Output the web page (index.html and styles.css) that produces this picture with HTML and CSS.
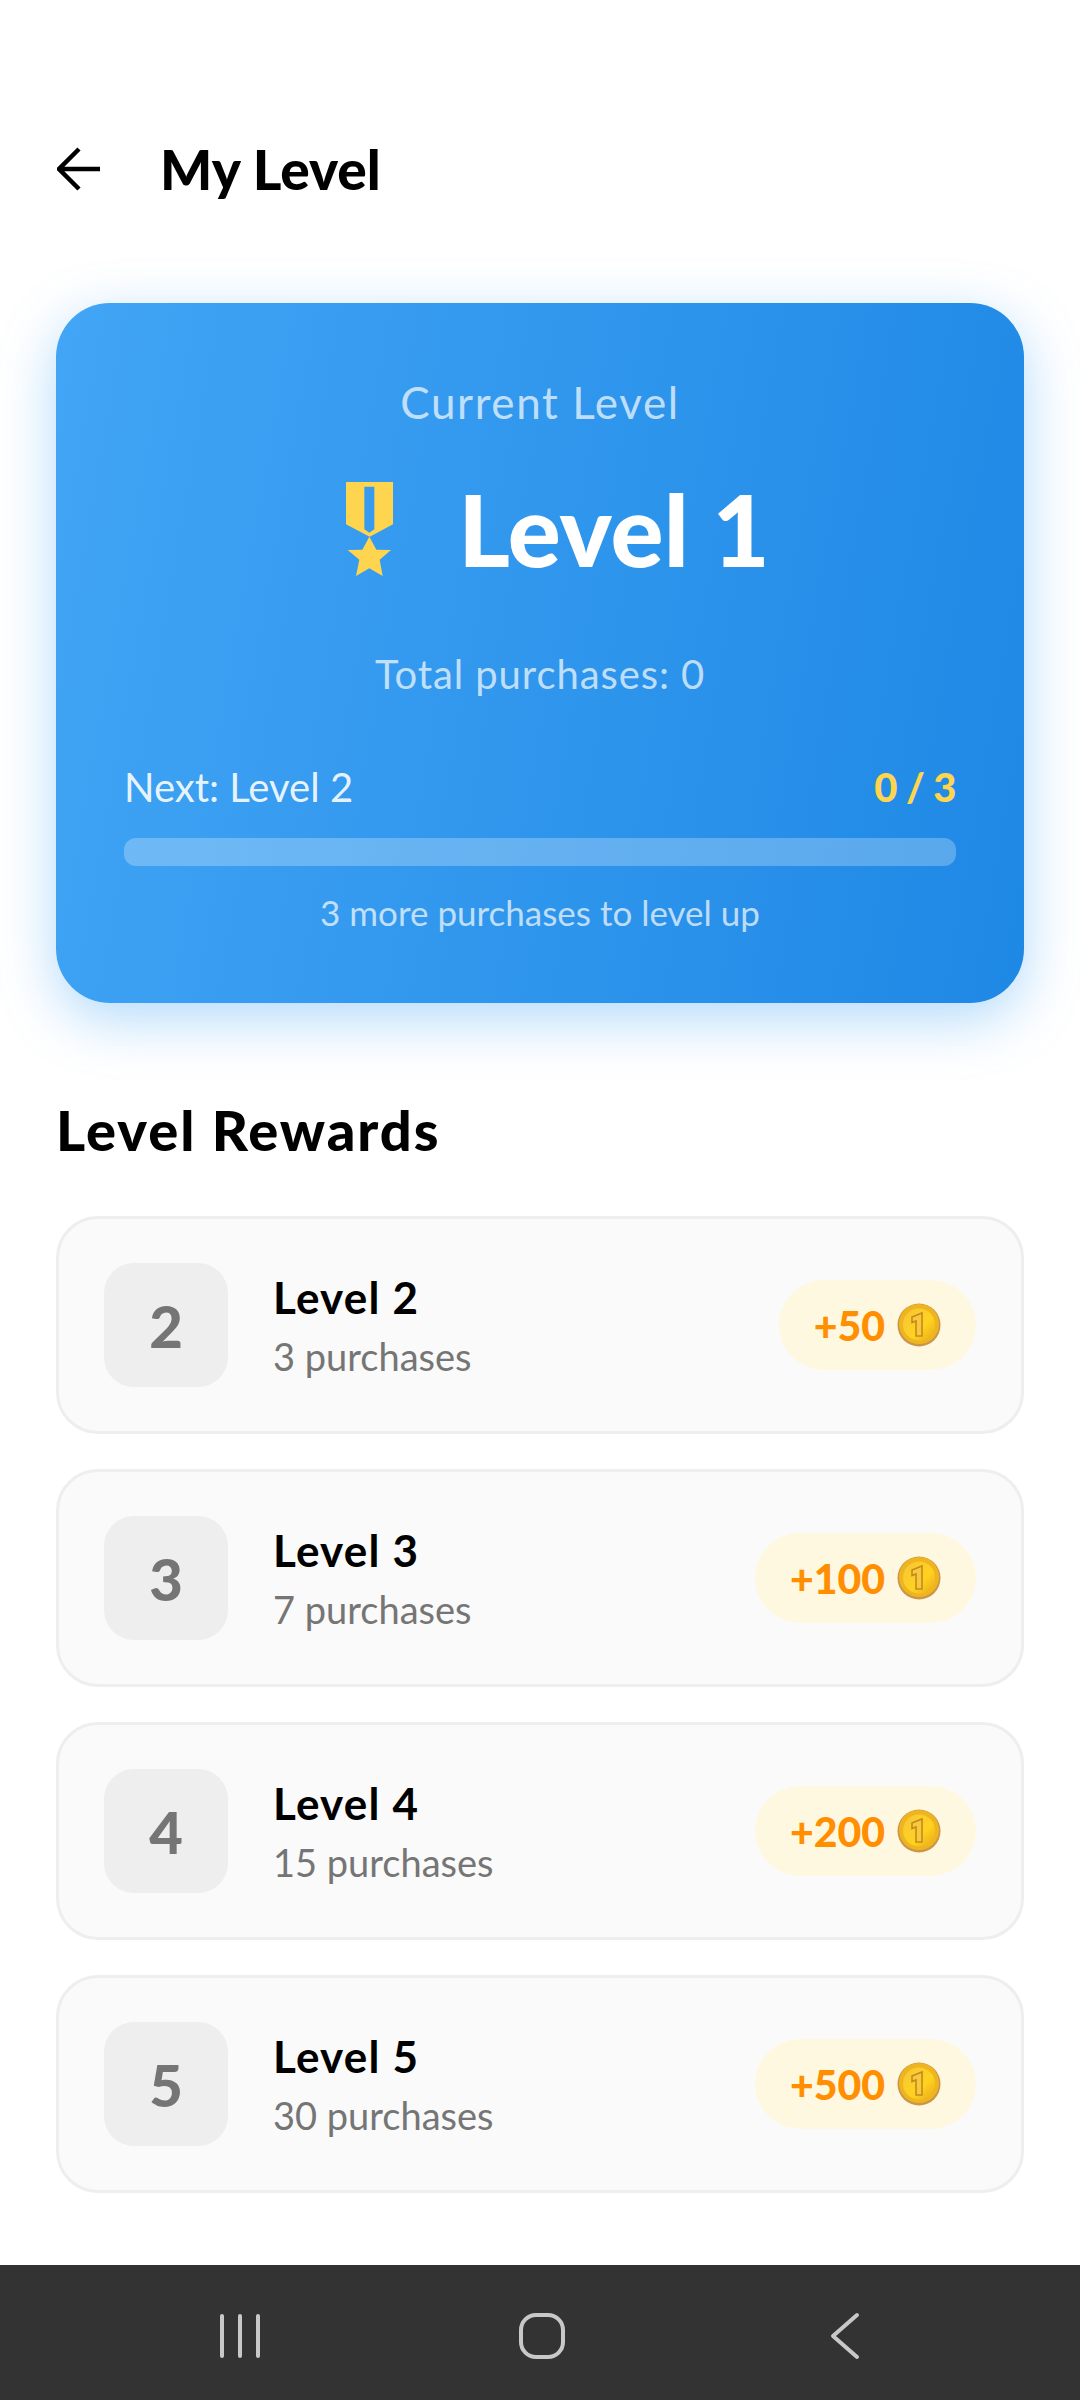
FILE: index.html
```html
<!DOCTYPE html>
<html>

<head>
  <meta charset="UTF-8" />
  <meta name="viewport" content="width=device-width, initial-scale=1.0" />
  <title>My Level</title>
  <link rel="stylesheet" href="styles.css">
</head>

<body>
  <div class="page">
    <header class="top-bar">
      <svg class="back-arrow" viewBox="0 0 44 44" width="44" height="44">
        <path d="M43 22H3M22 2L2 22l20 20" fill="none" stroke="#000" stroke-width="4.5" />
      </svg>
      <h1>My Level</h1>
    </header>

    <section class="level-card">
      <div class="current-label">Current Level</div>
      <div class="current-level">
        <svg class="medal" viewBox="137 98 141 282" width="47" height="94">
          <path fill-rule="evenodd" fill="#ffd54f"
            d="M137 98H278V225L208 262L137 225ZM192 112V240L207 250L222 240V112Z" />
          <path fill="#ffd54f" d="M207 262L228 301L272 302L238 331L247 380L207 357L167 380L177 331L142 302L186 301Z" />
        </svg>
        <span class="current-name">Level 1</span>
      </div>
      <div class="total">Total purchases: 0</div>
      <div class="next-row">
        <span>Next: Level 2</span>
        <span class="next-count">0 / 3</span>
      </div>
      <div class="progress"></div>
      <div class="hint">3 more purchases to level up</div>
    </section>

    <h2>Level Rewards</h2>

    <div class="reward-list">
      <div class="reward">
        <div class="reward-num">2</div>
        <div class="reward-info">
          <div class="reward-name">Level 2</div>
          <div class="reward-need">3 purchases</div>
        </div>
        <div class="reward-pill">+50
          <svg class="coin" viewBox="0 0 44 44" width="44" height="44">
            <use href="#coin" />
          </svg>
        </div>
      </div>
      <div class="reward">
        <div class="reward-num">3</div>
        <div class="reward-info">
          <div class="reward-name">Level 3</div>
          <div class="reward-need">7 purchases</div>
        </div>
        <div class="reward-pill">+100
          <svg class="coin" viewBox="0 0 44 44" width="44" height="44">
            <use href="#coin" />
          </svg>
        </div>
      </div>
      <div class="reward">
        <div class="reward-num">4</div>
        <div class="reward-info">
          <div class="reward-name">Level 4</div>
          <div class="reward-need">15 purchases</div>
        </div>
        <div class="reward-pill">+200
          <svg class="coin" viewBox="0 0 44 44" width="44" height="44">
            <use href="#coin" />
          </svg>
        </div>
      </div>
      <div class="reward">
        <div class="reward-num">5</div>
        <div class="reward-info">
          <div class="reward-name">Level 5</div>
          <div class="reward-need">30 purchases</div>
        </div>
        <div class="reward-pill">+500
          <svg class="coin" viewBox="0 0 44 44" width="44" height="44">
            <use href="#coin" />
          </svg>
        </div>
      </div>
    </div>
  </div>

  <nav class="nav-bar">
    <svg viewBox="0 0 44 46" width="44" height="46">
      <path d="M4 3V43M22 3V43M40 3V43" fill="none" stroke="#c8c8c8" stroke-width="4" stroke-linecap="round" />
    </svg>
    <svg viewBox="0 0 46 46" width="46" height="46">
      <rect x="2" y="2" width="42" height="42" rx="15" fill="none" stroke="#c8c8c8" stroke-width="4" />
    </svg>
    <svg viewBox="0 0 38 48" width="38" height="48">
      <path d="M35 3L11 24L35 45" fill="none" stroke="#c8c8c8" stroke-width="4" stroke-linecap="round"
        stroke-linejoin="round" />
    </svg>
  </nav>

  <svg class="defs" width="0" height="0">
    <defs>
      <linearGradient id="coinFill" x1="0" y1="0" x2="1" y2="1">
        <stop offset="0" stop-color="#f5c63a" />
        <stop offset="0.6" stop-color="#ffd21f" />
        <stop offset="1" stop-color="#e8a91a" />
      </linearGradient>
      <g id="coin">
        <circle cx="22" cy="22" r="21.5" fill="#c9964a" />
        <circle cx="22" cy="21" r="20" fill="#eeb51f" />
        <circle cx="22" cy="21.5" r="16" fill="url(#coinFill)" />
        <path d="M15 14L25 10V33H19V18L15 19.5Z" fill="#f7c93f" stroke="#c58a1c" stroke-width="1.6" />
      </g>
    </defs>
  </svg>
</body>

</html>
```

FILE: styles.css
```css
* {
  box-sizing: border-box;
}

body {
  margin: 0;
  width: 1080px;
  height: 2400px;
  display: flex;
  flex-direction: column;
  background: #fff;
  font-family: "Lato", "Noto Sans", sans-serif;
  color: #000;
}

.page {
  flex: 1;
  padding: 0 56px;
}

.defs {
  position: absolute;
}

.top-bar {
  display: flex;
  align-items: center;
  gap: 59px;
  height: 88px;
  margin-top: 125px;
  padding-left: 1px;
}

.back-arrow {
  flex: none;
}

h1 {
  margin: 0;
  font-size: 55px;
  font-weight: 900;
}

.level-card {
  margin-top: 90px;
  height: 700px;
  padding: 74px 68px 0;
  border-radius: 54px;
  background: linear-gradient(100deg, #42a5f5, #1e88e5);
  box-shadow: 0 16px 56px rgba(33, 150, 243, 0.35);
  color: #fff;
}

.current-label {
  text-align: center;
  font-size: 44px;
  line-height: 50px;
  letter-spacing: 1.6px;
  color: rgba(255, 255, 255, 0.7);
}

.current-level {
  display: flex;
  justify-content: center;
  align-items: center;
  gap: 65px;
  margin-top: 52px;
  padding-left: 36px;
  height: 100px;
}

.current-name {
  font-size: 99px;
  font-weight: 900;
  line-height: 100px;
}

.total {
  margin-top: 71px;
  text-align: center;
  font-size: 40px;
  line-height: 48px;
  letter-spacing: 0.9px;
  color: rgba(255, 255, 255, 0.7);
}

.next-row {
  display: flex;
  justify-content: space-between;
  margin-top: 66px;
  font-size: 40px;
  line-height: 46px;
  color: rgba(255, 255, 255, 0.9);
}

.next-count {
  font-weight: 900;
  letter-spacing: -0.5px;
  color: #ffd54f;
}

.progress {
  height: 28px;
  margin-top: 28px;
  border-radius: 12px;
  background: rgba(255, 255, 255, 0.26);
}

.hint {
  margin-top: 26px;
  text-align: center;
  font-size: 35px;
  line-height: 40px;
  color: rgba(255, 255, 255, 0.7);
}

h2 {
  margin: 95px 0 0;
  font-size: 56px;
  line-height: 64px;
  letter-spacing: 2px;
  font-weight: 900;
}

.reward-list {
  display: flex;
  flex-direction: column;
  gap: 35px;
  margin-top: 54px;
}

.reward {
  display: flex;
  align-items: center;
  height: 218px;
  padding: 0 45px;
  border: 3px solid #eee;
  border-radius: 42px;
  background: #fafafa;
}

.reward-num {
  display: flex;
  justify-content: center;
  align-items: center;
  flex: none;
  width: 124px;
  height: 124px;
  border-radius: 30px;
  background: #eee;
  color: #757575;
  font-size: 58px;
  font-weight: 900;
}

.reward-info {
  flex: 1;
  margin-left: 45px;
}

.reward-name {
  font-size: 44px;
  line-height: 52px;
  letter-spacing: 1.2px;
  font-weight: 700;
}

.reward-need {
  margin-top: 10px;
  font-size: 38px;
  line-height: 46px;
  color: #757575;
}

.reward-pill {
  display: flex;
  align-items: center;
  gap: 12px;
  height: 90px;
  padding: 0 35px;
  border-radius: 45px;
  background: #fff8e1;
  color: #ff8f00;
  font-size: 41px;
  font-weight: 900;
}

.nav-bar {
  display: flex;
  justify-content: space-between;
  align-items: center;
  flex: none;
  height: 135px;
  padding: 6px 220px 0 218px;
  background: #333;
}
```
